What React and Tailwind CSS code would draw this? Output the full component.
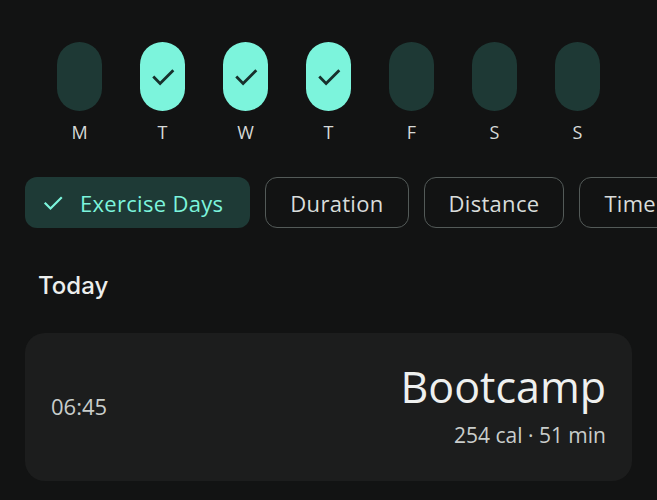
import React from 'react';

const days = [
  { label: 'M', done: false },
  { label: 'T', done: true },
  { label: 'W', done: true },
  { label: 'T', done: true },
  { label: 'F', done: false },
  { label: 'S', done: false },
  { label: 'S', done: false },
];

const chips = ['Duration', 'Distance', 'Time'];

const Check = ({ className, strokeWidth = 2.4 }) => (
  <svg viewBox="0 0 24 24" className={className} fill="none" stroke="currentColor" strokeWidth={strokeWidth} strokeLinecap="square">
    <path d="M4.5 12.5l5 5L20 7" />
  </svg>
);

const App = () => {
  return (
    <div
      className="w-full h-[500px] overflow-hidden bg-[#121313] text-[#e3e3e1]"
      style={{ fontFamily: '"Open Sans", Roboto, sans-serif' }}
    >
      {/* week strip */}
      <div className="flex gap-[38px] pl-[57px] pt-[42px]">
        {days.map((d, i) => (
          <div key={i} className="flex flex-col items-center w-[45px]">
            <div
              className={
                d.done
                  ? 'w-[45px] h-[69px] rounded-full bg-[#7cf4dc] flex items-center justify-center text-[#17302c]'
                  : 'w-[45px] h-[69px] rounded-full bg-[#1e3935]'
              }
            >
              {d.done && <Check className="w-[28px] h-[28px]" />}
            </div>
            <span className="mt-[9px] text-[18px] leading-[24px] text-[#d6dad8]">{d.label}</span>
          </div>
        ))}
      </div>

      {/* filter chips */}
      <div className="flex gap-[15px] pl-[25px] mt-[33px] whitespace-nowrap">
        <div className="h-[51px] shrink-0 flex items-center pl-[16px] pr-[27px] rounded-[12px] bg-[#1e3a36] text-[#7cf4dc]">
          <Check className="w-[24px] h-[24px]" strokeWidth={2.2} />
          <span className="ml-[15px] text-[22px] tracking-[0.3px] leading-[28px]">Exercise Days</span>
        </div>
        {chips.map((c) => (
          <div
            key={c}
            className="h-[51px] shrink-0 flex items-center px-[24px] rounded-[12px] border-[1.5px] border-[#535a58] text-[22px] tracking-[0.3px] leading-[28px] text-[#d9dddb]"
          >
            {c}
          </div>
        ))}
      </div>

      {/* today */}
      <div
        className="pl-[38px] mt-[42px] text-[24px] font-medium text-[#eceeed] leading-[32px]"
        style={{ fontFamily: 'Inter, "Open Sans", sans-serif' }}
      >
        Today
      </div>

      <div className="mx-[25px] mt-[31px] h-[148px] rounded-[20px] bg-[#1c1d1d] flex items-center justify-between pl-[26px] pr-[26px]">
        <span className="text-[22px] leading-[28px] text-[#c9cdcb] mt-[-3px]">06:45</span>
        <div className="flex flex-col items-end mt-[-2px]">
          <span className="text-[43px] leading-[46px] text-[#eef0ef]">Bootcamp</span>
          <span className="text-[21px] leading-[28px] mt-[11px] text-[#c9cdcb]">254 cal · 51 min</span>
        </div>
      </div>
    </div>
  );
};

export default App;
